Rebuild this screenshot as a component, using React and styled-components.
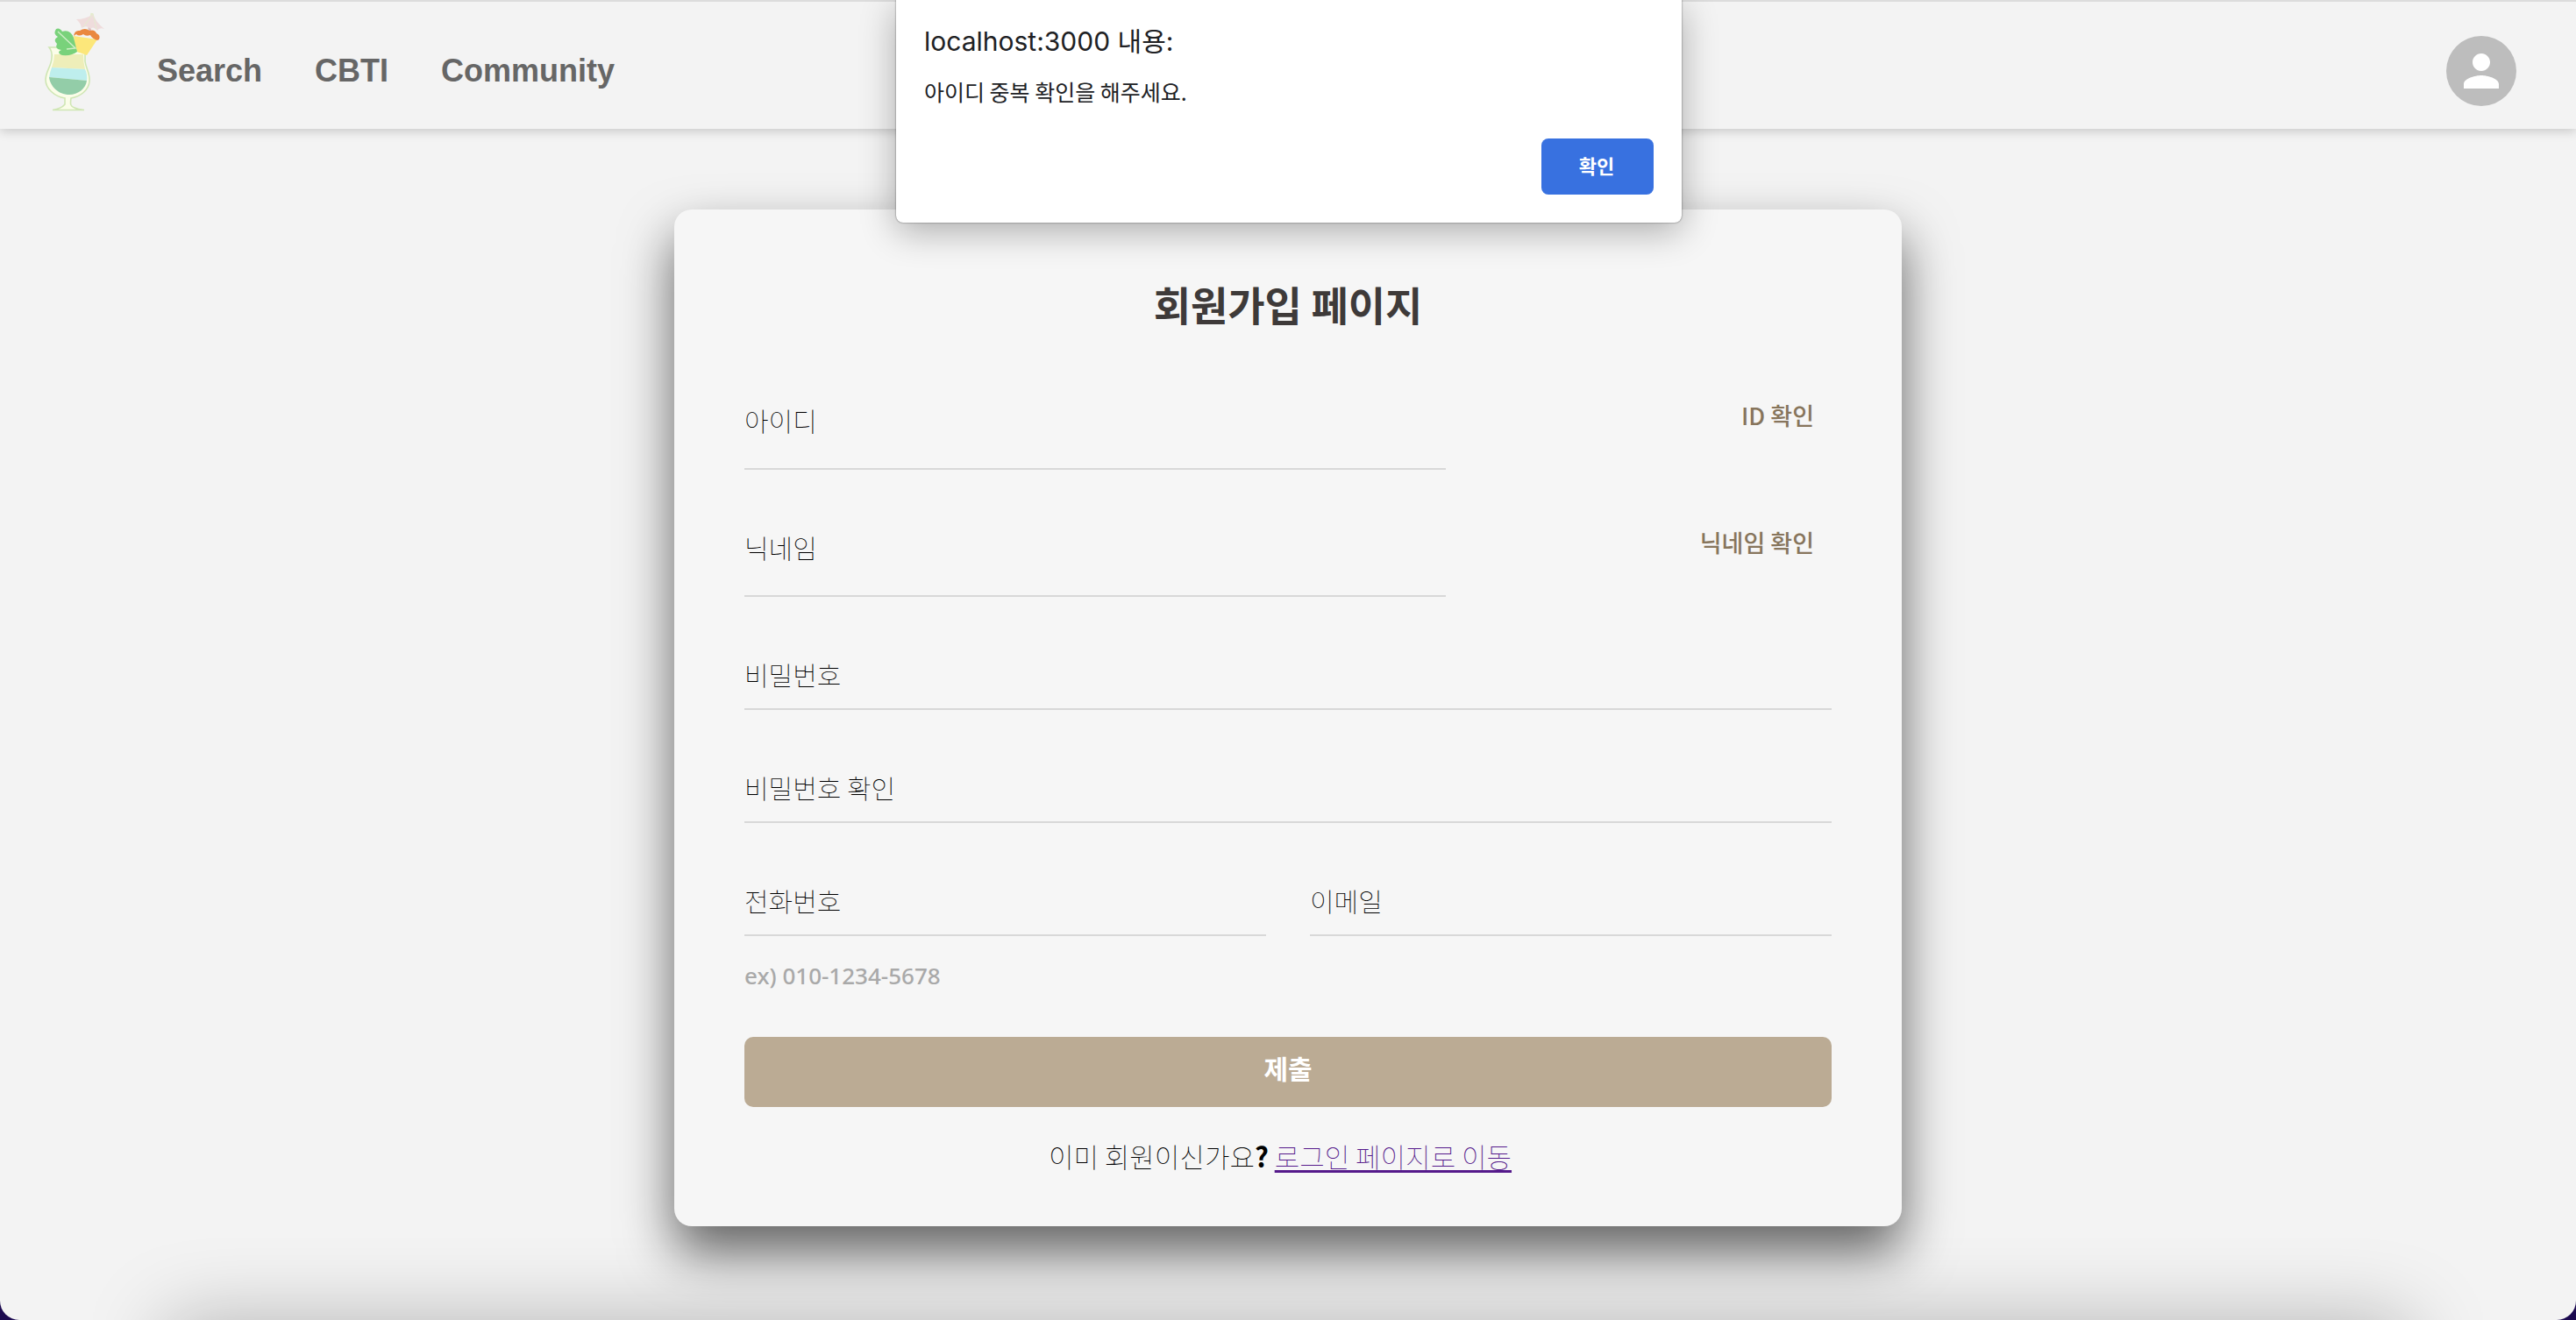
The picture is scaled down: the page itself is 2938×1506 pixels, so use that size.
import React from "react";
import styled, { createGlobalStyle } from "styled-components";

const GlobalStyle = createGlobalStyle`
  *, *::before, *::after { box-sizing: border-box; }
  html { height: 100%; background: #1c0a50; }
  body {
    margin: 0;
    height: 100%;
    font-family: "Noto Sans CJK KR", sans-serif;
    color: #000;
  }
  #root { height: 100%; }
`;

const Page = styled.div`
  position: relative;
  display: flex;
  flex-direction: column;
  min-height: 100%;
  overflow: hidden;
  background: #f3f3f3;
  border-radius: 0 0 22px 22px;

  &::after {
    content: "";
    position: absolute;
    top: 100%;
    left: 190px;
    right: 190px;
    height: 200px;
    box-shadow: 0 0 90px rgba(0, 0, 0, 0.26);
  }
`;

const Header = styled.header`
  display: flex;
  align-items: center;
  height: 147px;
  padding: 0 68px 0 51px;
  border-top: 2px solid #dcdcdc;
  background: #f3f3f3;
  box-shadow: 0 2px 12px rgba(0, 0, 0, 0.2);
`;

const LogoLink = styled.a`
  display: flex;
  width: 68px;
  margin: 0 60px 8px 0;
`;

const Nav = styled.nav`
  display: flex;
  flex: 1;
  gap: 60px;
  padding-top: 12px;
`;

const NavLink = styled.a`
  font: 700 36px/44px "Liberation Sans", Arial, sans-serif;
  color: #666;
  text-decoration: none;
`;

const Avatar = styled.button`
  display: flex;
  align-items: center;
  justify-content: center;
  width: 80px;
  height: 80px;
  margin-top: 12px;
  padding: 0;
  border: 0;
  border-radius: 50%;
  background: #bdbdbd;
`;

const Main = styled.main`
  display: flex;
  justify-content: center;
  padding: 92px 40px 107px;
`;

const Card = styled.form`
  display: flex;
  flex-direction: column;
  width: 100%;
  max-width: 1400px;
  padding: 73px 80px 58px;
  border-radius: 20px;
  background: #f6f6f6;
  box-shadow: 0 30px 60px rgba(0, 0, 0, 0.6);
`;

const Title = styled.h1`
  margin: 0 0 51px;
  font-size: 46px;
  font-weight: 700;
  line-height: 68px;
  text-align: center;
  color: #3e3a39;
`;

const Row = styled.div`
  display: flex;
  justify-content: space-between;
  gap: 50px;
`;

const Field = styled.div`
  display: flex;
  flex-direction: column;
  flex: ${(p) => (p.$width ? "none" : "1")};
  width: ${(p) => p.$width || "auto"};
  height: ${(p) => (p.$tall ? "105px" : "89px")};
  margin-bottom: 40px;
  position: relative;
`;

const Label = styled.label`
  position: absolute;
  top: 26px;
  left: 0;
  font-size: 30px;
  font-weight: 100;
  line-height: 44px;
  color: #000;
  pointer-events: none;
`;

const Input = styled.input`
  flex: 1;
  width: 100%;
  padding: 28px 0 0;
  border: 0;
  border-bottom: 2px solid #d8d8d8;
  border-radius: 0;
  outline: 0;
  background: transparent;
  font: inherit;
  font-size: 30px;
`;

const CheckButton = styled.button`
  align-self: flex-start;
  margin-top: 23px;
  padding: 0 20px;
  border: 0;
  background: transparent;
  font: inherit;
  font-size: 27px;
  font-weight: 500;
  line-height: 40px;
  color: #87755c;
`;

const Hint = styled.p`
  margin: -16px 0 49px;
  font: 500 26px/42px "Noto Sans", sans-serif;
  color: #a9a9a9;
`;

const Submit = styled.button`
  height: 80px;
  padding: 0 0 10px;
  border: 0;
  border-radius: 10px;
  background: #bbab94;
  font: inherit;
  font-size: 30px;
  font-weight: 700;
  color: #fff;
`;

const LoginLine = styled.p`
  margin: 34px 0 0;
  padding-right: 18px;
  font-size: 31px;
  font-weight: 100;
  line-height: 44px;
  text-align: center;

  b { font-weight: 700; }
  a {
    color: #551a8b;
    text-decoration-thickness: 3px;
    text-underline-offset: 3px;
  }
`;

const Dialog = styled.section`
  position: absolute;
  top: 0;
  left: 50%;
  z-index: 2;
  display: flex;
  flex-direction: column;
  width: 896px;
  margin-left: -447px;
  padding: 26px 32px 32px;
  border-radius: 0 0 8px 8px;
  background: #fff;
  color: #202124;
  box-shadow: 0 0 2px rgba(0, 0, 0, 0.6), 0 10px 40px rgba(0, 0, 0, 0.3);
`;

const DialogTitle = styled.h2`
  margin: 0;
  font: 400 30px/42px Inter, "Noto Sans CJK KR", sans-serif;
`;

const DialogText = styled.p`
  margin: 16px 0 34px;
  font-size: 25px;
  line-height: 40px;
`;

const DialogButton = styled.button`
  align-self: flex-end;
  width: 128px;
  height: 64px;
  padding: 0 2px 4px 0;
  border: 0;
  border-radius: 8px;
  background: #3871e0;
  font: inherit;
  font-size: 22px;
  font-weight: 700;
  color: #fff;
`;

function CocktailLogo() {
  return (
    <svg width="68" height="116" viewBox="0 0 68 116" aria-hidden="true">
      <path d="M54 2L50 27" stroke="#e3eccb" strokeWidth="3" />
      <path d="M52 26l-1-8" stroke="#dcb9be" strokeWidth="3" />
      <path d="M36 9Q47 9 55 3Q58 12 68 20Q62 18 60 22Q55 16 52 20Q48 15 42 19Q41 13 36 9z" fill="#efdcdc" />
      <path d="M55 3L44 18M55 3L59 20" stroke="#e6e9d2" strokeWidth="1.2" />
      <path d="M5 41H15L46 47Q46 51 46 57C47 65 52 71 51 80C50 90 41 97 30 99C29 106 29 108 34 110Q38 112 45 112.500L9 112.500Q19 111 23 106L23 99C11 97 1 88 1 78C1 68 8 62 8 53Q9 46 5 41z" fill="#fbfde9" stroke="#cfe6b4" strokeWidth="1.6" />
      <path d="M11 49H44Q44 58 46 66L8 64Q11 56 11 49z" fill="#eeeeb9" />
      <path d="M8 64L46 66Q49 72 48 79L5 75Q6 69 8 64z" fill="#beeeed" />
      <path d="M5 75L48 79C47 88 38 95 28 95C15 95 6 85 5 75z" fill="#93cda8" />
      <path d="M33 28L60 32L48 50L37 46L34 36z" fill="#fce77a" />
      <path d="M33 28Q34 21 40 22Q46 18 51 22Q57 20 59 25Q64 27 62 32L60 33Q54 31 52 27Q47 29 44 26Q39 29 36 26z" fill="#ea883f" />
      <path d="M12 22C13 18 18 19 20 23Q29 20 33 30L37 46Q31 51 20 50C14 48 16 45 19 44Q11 43 14 37C10 33 12 31 15 29Q10 26 12 22z" fill="#79d27b" />
      <path d="M15 23L35 42L25 43" fill="none" stroke="#d0efc8" strokeWidth="1.4" />
    </svg>
  );
}

function TextField({ id, label, type = "text", tall, width }) {
  return (
    <Field $tall={tall} $width={width}>
      <Label htmlFor={id}>{label}</Label>
      <Input id={id} type={type} />
    </Field>
  );
}

export default function App() {
  return (
    <>
      <GlobalStyle />
      <Page>
        <Header>
          <LogoLink href="#home" aria-label="Home">
            <CocktailLogo />
          </LogoLink>
          <Nav>
            <NavLink href="#search">Search</NavLink>
            <NavLink href="#cbti">CBTI</NavLink>
            <NavLink href="#community">Community</NavLink>
          </Nav>
          <Avatar type="button" aria-label="Account">
            <svg width="60" height="60" viewBox="0 0 24 24" fill="#fff">
              <path d="M12 12c2.21 0 4-1.79 4-4s-1.79-4-4-4-4 1.79-4 4 1.79 4 4 4zm0 2c-2.67 0-8 1.34-8 4v2h16v-2c0-2.66-5.33-4-8-4z" />
            </svg>
          </Avatar>
        </Header>
        <Main>
          <Card>
            <Title>회원가입 페이지</Title>
            <Row>
              <TextField id="user-id" label="아이디" tall width="800px" />
              <CheckButton type="button">ID 확인</CheckButton>
            </Row>
            <Row>
              <TextField id="nickname" label="닉네임" tall width="800px" />
              <CheckButton type="button">닉네임 확인</CheckButton>
            </Row>
            <Row>
              <TextField id="password" label="비밀번호" type="password" />
            </Row>
            <Row>
              <TextField id="password-check" label="비밀번호 확인" type="password" />
            </Row>
            <Row>
              <TextField id="phone" label="전화번호" type="tel" />
              <TextField id="email" label="이메일" type="email" />
            </Row>
            <Hint>ex) 010-1234-5678</Hint>
            <Submit type="submit">제출</Submit>
            <LoginLine>
              이미 회원이신가요<b>?</b> <a href="#login">로그인 페이지로 이동</a>
            </LoginLine>
          </Card>
        </Main>
        <Dialog role="alertdialog" aria-labelledby="dialog-title" aria-describedby="dialog-text">
          <DialogTitle id="dialog-title">localhost:3000 내용:</DialogTitle>
          <DialogText id="dialog-text">아이디 중복 확인을 해주세요.</DialogText>
          <DialogButton type="button">확인</DialogButton>
        </Dialog>
      </Page>
    </>
  );
}
